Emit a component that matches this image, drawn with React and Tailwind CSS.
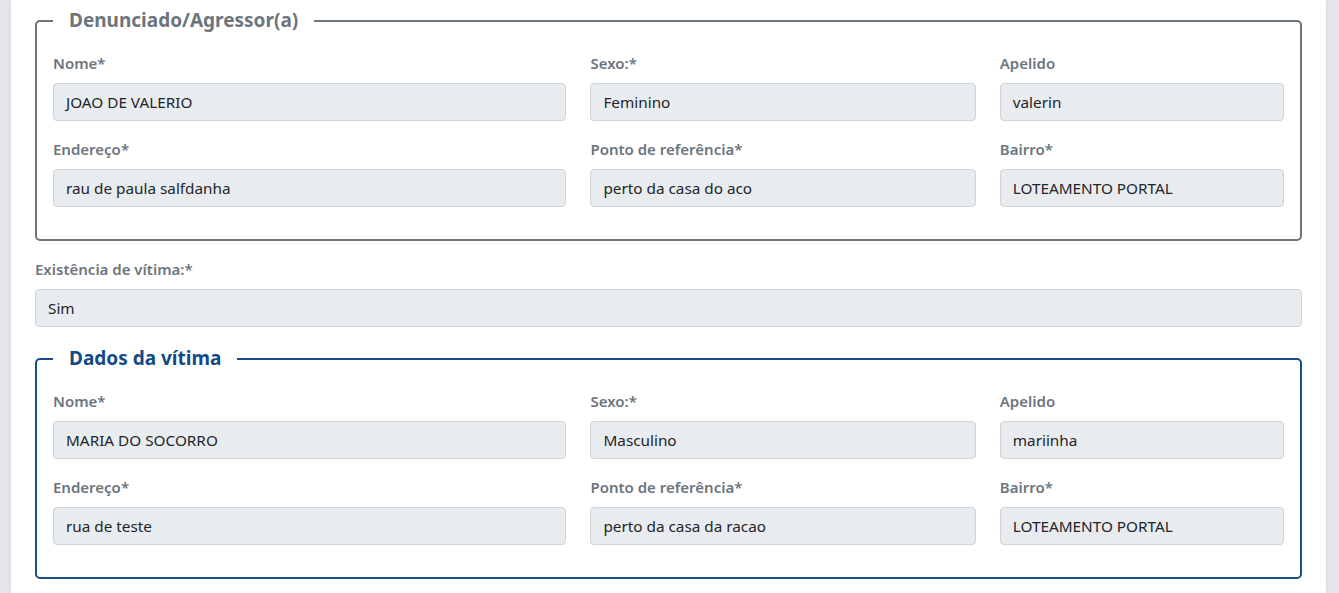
const agressor = [
  [
    { label: 'Nome*', value: 'JOAO DE VALERIO' },
    { label: 'Sexo:*', value: 'Feminino' },
    { label: 'Apelido', value: 'valerin' },
  ],
  [
    { label: 'Endereço*', value: 'rau de paula salfdanha' },
    { label: 'Ponto de referência*', value: 'perto da casa do aco' },
    { label: 'Bairro*', value: 'LOTEAMENTO PORTAL' },
  ],
];

const vitima = [
  [
    { label: 'Nome*', value: 'MARIA DO SOCORRO' },
    { label: 'Sexo:*', value: 'Masculino' },
    { label: 'Apelido', value: 'mariinha' },
  ],
  [
    { label: 'Endereço*', value: 'rua de teste' },
    { label: 'Ponto de referência*', value: 'perto da casa da racao' },
    { label: 'Bairro*', value: 'LOTEAMENTO PORTAL' },
  ],
];

function Field({ label, value }) {
  return (
    <div className="mb-4 flex flex-col">
      <label className="mb-2 text-[15px] leading-[24px] font-semibold text-[#6c757d]">{label}</label>
      <div className="flex h-[38px] items-center rounded-[4px] border border-[#ced4da] bg-[#e9ecef] px-[12px] text-[15.3px] text-[#212529]">
        {value}
      </div>
    </div>
  );
}

function Section({ title, rows, tone }) {
  const blue = tone === 'blue';
  return (
    <fieldset
      className={
        blue
          ? 'rounded-[5px] border-2 border-[#174e86] px-4 pt-[19px] pb-4'
          : 'rounded-[5px] border-2 border-[#6c757d] px-4 pt-[19px] pb-4'
      }
    >
      <legend
        className={
          blue
            ? 'px-4 text-[19px] leading-[23px] font-bold text-[#124a86]'
            : 'px-4 text-[19px] leading-[23px] font-bold text-[#6c757d]'
        }
      >
        {title}
      </legend>
      {rows.map((row, i) => (
        <div key={i} className="grid grid-cols-[513fr_385fr_284fr] gap-x-6">
          {row.map((f) => (
            <Field key={f.label} {...f} />
          ))}
        </div>
      ))}
    </fieldset>
  );
}

export default function App() {
  return (
    <div
      className="flex h-[593px] w-full overflow-hidden bg-[#e4e6ea]"
      style={{ fontFamily: '"Noto Sans", "Open Sans", sans-serif' }}
    >
      <div className="ml-[11px] mr-[13px] flex-1 bg-white px-6 pt-[9px] shadow-[0_0_4px_rgba(0,0,0,0.08)]">
        <Section title="Denunciado/Agressor(a)" rows={agressor} />
        <div className="mt-4 mb-[20px] flex flex-col">
          <label className="mb-2 text-[15px] leading-[24px] font-semibold text-[#6c757d]">Existência de vítima:*</label>
          <div className="flex h-[38px] items-center rounded-[4px] border border-[#ced4da] bg-[#e9ecef] px-[12px] text-[15.3px] text-[#212529]">
            Sim
          </div>
        </div>
        <Section title="Dados da vítima" rows={vitima} tone="blue" />
      </div>
    </div>
  );
}
